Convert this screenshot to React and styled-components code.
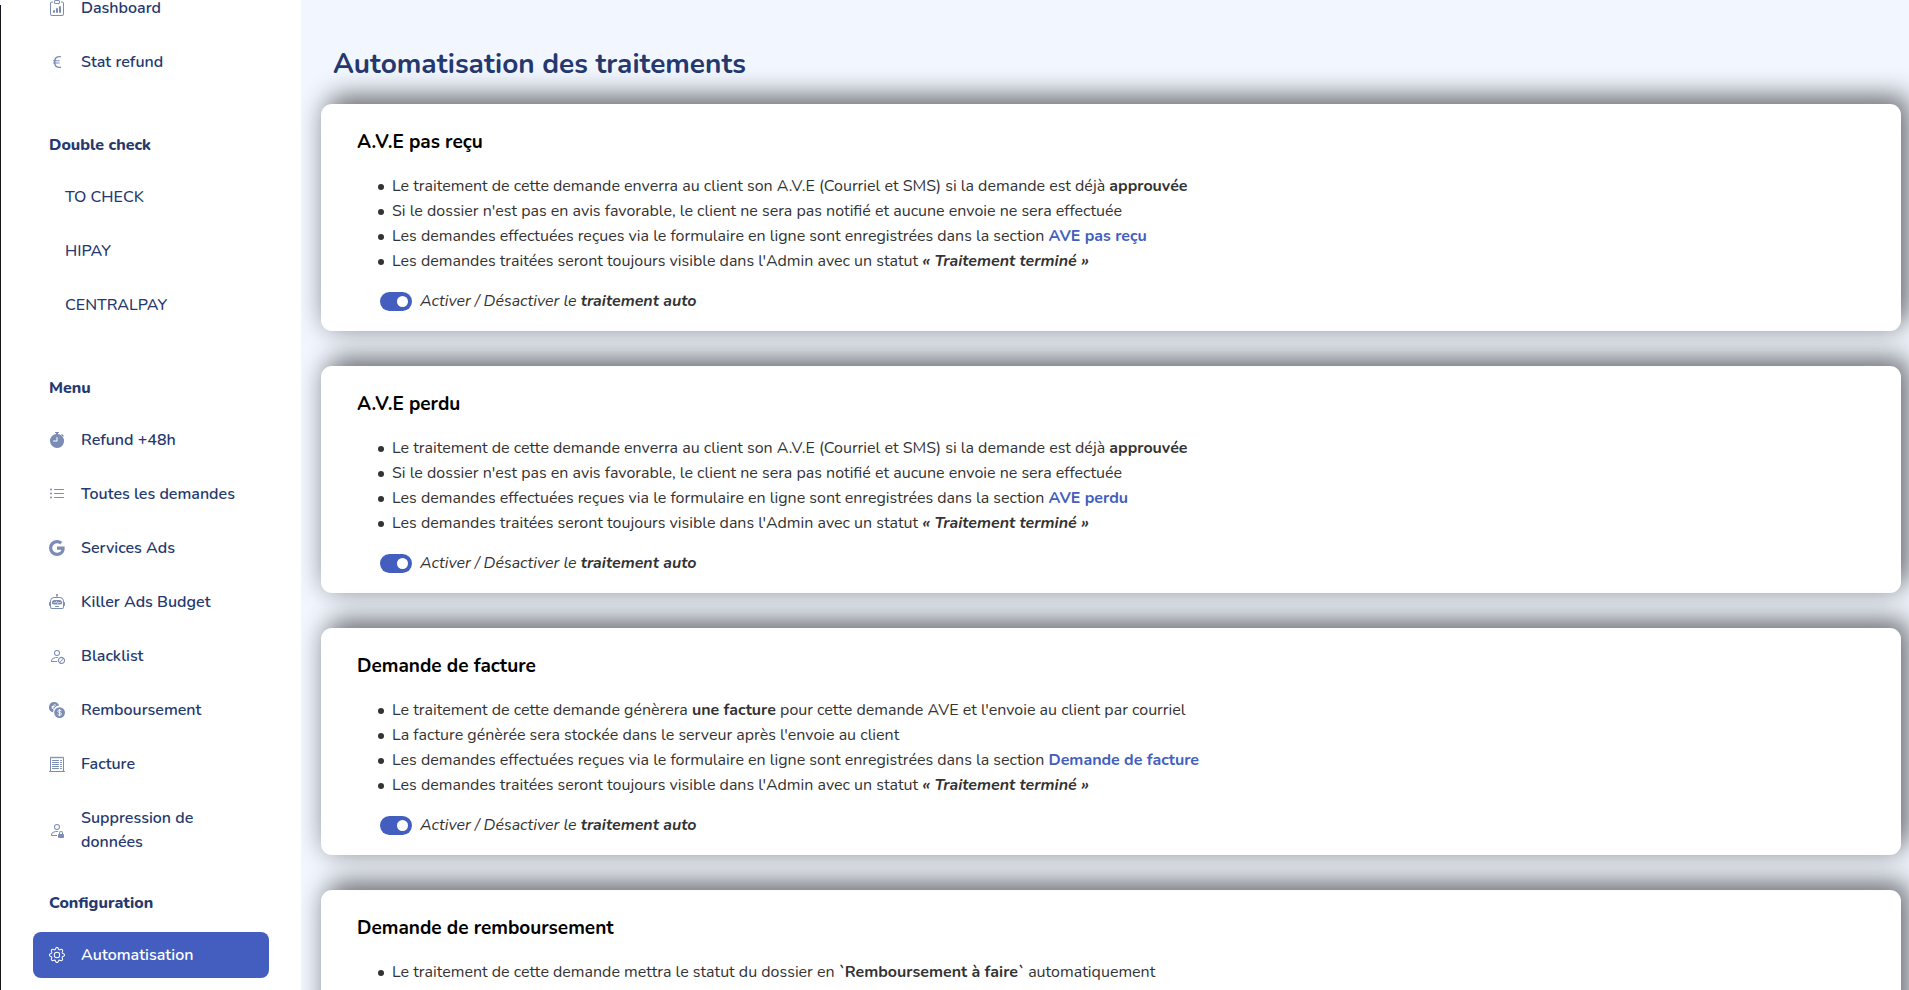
import React, { useState } from "react";
import styled, { createGlobalStyle } from "styled-components";
import {
  BsClipboardData,
  BsCurrencyEuro,
  BsStopwatchFill,
  BsListUl,
  BsGoogle,
  BsRobot,
  BsPersonSlash,
  BsPersonLock,
  BsGear,
  BsReceiptCutoff,
} from "react-icons/bs";

const GlobalStyle = createGlobalStyle`
  *, *::before, *::after { box-sizing: border-box; }
  html, body, #root { height: 100%; }
  body {
    margin: 0;
    background: #f2f7ff;
    color: #333;
    font-family: Nunito, "Open Sans", sans-serif;
    font-size: 16px;
    line-height: 24px;
  }
`;

const Shell = styled.div`
  display: flex;
  height: 100vh;
  overflow: hidden;
`;

const WindowEdge = styled.div`
  flex: 0 0 1px;
  margin-top: 5px;
  background: #16161a;
`;

const Sidebar = styled.aside`
  flex: 0 0 300px;
  overflow: hidden;
  background: #fff;
`;

const Nav = styled.nav`
  margin-top: -15px;
  padding: 0 32px;
`;

const NavTitle = styled.h2`
  margin: ${(p) => (p.$tight ? 26 : 48)}px 16px 17px;
  font-size: 16px;
  line-height: 24px;
  font-weight: 800;
  color: #25396f;
`;

const NavList = styled.ul`
  display: flex;
  flex-direction: column;
  gap: 8px;
  margin: 0;
  padding: 0;
  list-style: none;
`;

const NavLink = styled.a`
  display: flex;
  align-items: center;
  gap: 16px;
  padding: 11px 16px;
  border-radius: 8px;
  color: ${(p) => (p.$active ? "#fff" : "#25396f")};
  background: ${(p) => (p.$active ? "#435ebe" : "transparent")};
  font-weight: 600;
  text-decoration: none;

  svg {
    flex: none;
    width: 16px;
    height: 16px;
    color: ${(p) => (p.$active ? "#fff" : "#7c8db5")};
  }
`;

const SubLink = styled(NavLink)`
  padding-left: 32px;
  font-weight: 500;
`;

const Main = styled.main`
  flex: 1;
  min-width: 0;
  overflow: hidden;
  padding: 47px 8px 0 20px;
`;

const PageTitle = styled.h1`
  margin: 0 0 23px;
  padding-left: 12px;
  font-size: 28px;
  line-height: 34px;
  font-weight: 700;
  color: #25396f;
`;

const Cards = styled.div`
  display: flex;
  flex-direction: column;
  gap: 35px;
`;

const Card = styled.section`
  padding: 26px 36px 18px;
  border-radius: 11px;
  background: #fff;
  box-shadow: 10px -10px 26px rgba(0, 0, 0, 0.42), 0 0 26px rgba(0, 0, 0, 0.26);
`;

const CardTitle = styled.h3`
  margin: 0 0 20px;
  font-size: 19px;
  line-height: 24px;
  font-weight: 700;
  color: #000;
`;

const Rules = styled.ul`
  margin: 0 0 15px;
  padding-left: 21px;
  line-height: 25px;
  list-style: none;
`;

const Rule = styled.li`
  display: flex;
  align-items: center;
  gap: 8px;

  &::before {
    content: "";
    flex: none;
    width: 6px;
    height: 6px;
    border-radius: 50%;
    background: #333;
  }
`;

const SectionLink = styled.a`
  color: #435ebe;
  font-weight: 700;
  text-decoration: none;
`;

const SwitchLabel = styled.label`
  display: flex;
  align-items: center;
  gap: 8px;
  padding-left: 23px;
  font-style: italic;
`;

const Switch = styled.input`
  appearance: none;
  display: flex;
  align-items: center;
  justify-content: ${(p) => (p.checked ? "flex-end" : "flex-start")};
  width: 32px;
  height: 19px;
  margin: 0;
  padding: 0 4px;
  border-radius: 10px;
  background: ${(p) => (p.checked ? "#435ebe" : "#bfc4d4")};

  &::before {
    content: "";
    width: 11px;
    height: 11px;
    border-radius: 50%;
    background: #fff;
  }
`;

function CoinsIcon() {
  return (
    <svg viewBox="0 0 16 16" fill="currentColor" aria-hidden="true">
      <path d="M5.2 0a5.2 5.2 0 0 1 4.9 3.6 6.3 6.3 0 0 0-5.9 6.7A5.2 5.2 0 0 1 5.2 0Z" />
      <path
        d="M7 3.1A2.6 2.6 0 0 0 3.4 5.2c0 1.2.5 2 1.3 2.4M2.6 4.6h3.2M2.6 5.9h2.4"
        fill="none"
        stroke="#fff"
        strokeWidth="0.9"
      />
      <circle cx="10.6" cy="10.6" r="5.4" />
      <path
        d="M12.4 9.2c-.1-.8-.8-1.2-1.8-1.2s-1.8.5-1.8 1.3c0 1.8 3.7.8 3.7 2.6 0 .8-.8 1.3-1.9 1.3s-1.9-.5-2-1.3M10.6 7v7.2"
        fill="none"
        stroke="#fff"
        strokeWidth="0.9"
      />
    </svg>
  );
}

const overview = [
  { label: "Dashboard", Icon: BsClipboardData },
  { label: "Stat refund", Icon: BsCurrencyEuro },
];

const checks = ["TO CHECK", "HIPAY", "CENTRALPAY"];

const menu = [
  { label: "Refund +48h", Icon: BsStopwatchFill },
  { label: "Toutes les demandes", Icon: BsListUl },
  { label: "Services Ads", Icon: BsGoogle },
  { label: "Killer Ads Budget", Icon: BsRobot },
  { label: "Blacklist", Icon: BsPersonSlash },
  { label: "Remboursement", Icon: CoinsIcon },
  { label: "Facture", Icon: BsReceiptCutoff },
  { label: "Suppression de données", Icon: BsPersonLock },
];

const configuration = [{ label: "Automatisation", Icon: BsGear, active: true }];

const received = (section) => (
  <>
    Les demandes effectuées reçues via le formulaire en ligne sont enregistrées dans la section{" "}
    <SectionLink href="#section">{section}</SectionLink>
  </>
);

const processed = (
  <>
    Les demandes traitées seront toujours visible dans l'Admin avec un statut{" "}
    <b>
      <i>« Traitement terminé »</i>
    </b>
  </>
);

const sendAve = (
  <>
    Le traitement de cette demande enverra au client son A.V.E (Courriel et SMS) si la demande est déjà{" "}
    <b>approuvée</b>
  </>
);

const notApproved =
  "Si le dossier n'est pas en avis favorable, le client ne sera pas notifié et aucune envoie ne sera effectuée";

const automations = [
  { title: "A.V.E pas reçu", rules: [sendAve, notApproved, received("AVE pas reçu"), processed] },
  { title: "A.V.E perdu", rules: [sendAve, notApproved, received("AVE perdu"), processed] },
  {
    title: "Demande de facture",
    rules: [
      <>
        Le traitement de cette demande génèrera <b>une facture</b> pour cette demande AVE et l'envoie au client par
        courriel
      </>,
      "La facture génèrée sera stockée dans le serveur après l'envoie au client",
      received("Demande de facture"),
      processed,
    ],
  },
  {
    title: "Demande de remboursement",
    rules: [
      <>
        Le traitement de cette demande mettra le statut du dossier en <b>`Remboursement à faire`</b> automatiquement
      </>,
    ],
  },
];

function NavItems({ items }) {
  return (
    <NavList>
      {items.map(({ label, Icon, active }) => (
        <li key={label}>
          <NavLink href="#page" $active={active} aria-current={active ? "page" : undefined}>
            <Icon />
            <span>{label}</span>
          </NavLink>
        </li>
      ))}
    </NavList>
  );
}

function AutomationCard({ title, rules }) {
  const [enabled, setEnabled] = useState(true);
  return (
    <Card>
      <CardTitle>{title}</CardTitle>
      <Rules>
        {rules.map((rule, i) => (
          <Rule key={i}>
            <span>{rule}</span>
          </Rule>
        ))}
      </Rules>
      <SwitchLabel>
        <Switch type="checkbox" role="switch" checked={enabled} onChange={(e) => setEnabled(e.target.checked)} />
        <span>
          Activer / Désactiver le <b>traitement auto</b>
        </span>
      </SwitchLabel>
    </Card>
  );
}

export default function App() {
  return (
    <Shell>
      <GlobalStyle />
      <WindowEdge />
      <Sidebar>
        <Nav>
          <NavItems items={overview} />
          <NavTitle>Double check</NavTitle>
          <NavList>
            {checks.map((label) => (
              <li key={label}>
                <SubLink href="#page">{label}</SubLink>
              </li>
            ))}
          </NavList>
          <NavTitle>Menu</NavTitle>
          <NavItems items={menu} />
          <NavTitle $tight>Configuration</NavTitle>
          <NavItems items={configuration} />
        </Nav>
      </Sidebar>
      <Main>
        <PageTitle>Automatisation des traitements</PageTitle>
        <Cards>
          {automations.map((a) => (
            <AutomationCard key={a.title} {...a} />
          ))}
        </Cards>
      </Main>
    </Shell>
  );
}
